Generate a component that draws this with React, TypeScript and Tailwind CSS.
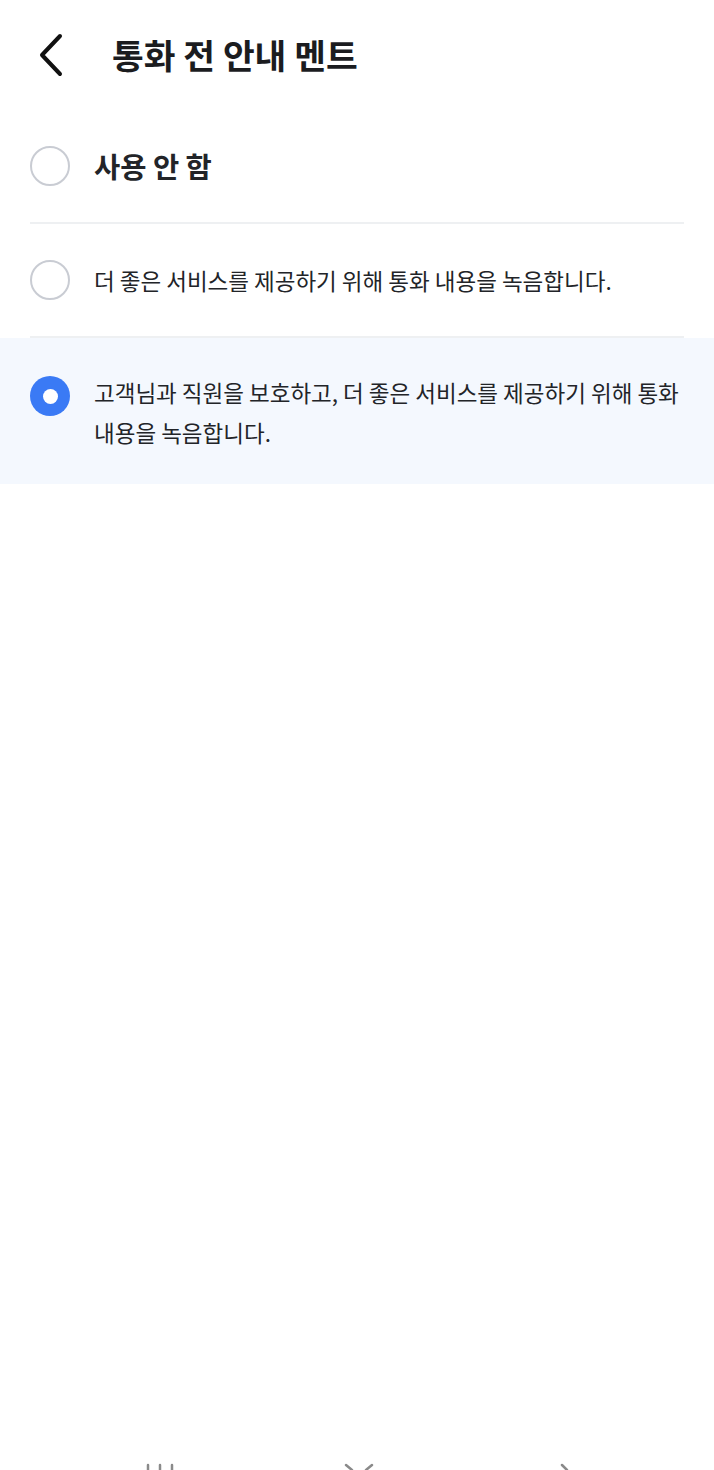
import { useState } from "react"

const options = [
  { id: "none", label: "사용 안 함", bold: true },
  { id: "basic", label: "더 좋은 서비스를 제공하기 위해 통화 내용을 녹음합니다." },
  { id: "full", label: "고객님과 직원을 보호하고, 더 좋은 서비스를 제공하기 위해 통화 내용을 녹음합니다." },
]

function Radio({ checked }: { checked: boolean }) {
  if (checked) {
    return (
      <span className="flex h-[40px] w-[40px] shrink-0 items-center justify-center rounded-full bg-[#3a7af5]">
        <span className="h-[15px] w-[15px] rounded-full bg-white" />
      </span>
    )
  }
  return <span className="block h-[40px] w-[40px] shrink-0 rounded-full border-2 border-[#c9ccd3] bg-white" />
}

export default function App() {
  const [selected, setSelected] = useState("full")

  return (
    <div
      className="relative flex h-[1470px] w-full flex-col overflow-hidden bg-white text-[#222428]"
      style={{ fontFamily: '"Noto Sans CJK KR", "Noto Sans", sans-serif' }}
    >
      {/* 헤더 */}
      <header className="flex h-[110px] items-center pl-[38px]">
        <button className="flex h-[44px] w-[30px] items-center">
          <svg width="26" height="44" viewBox="0 0 26 44" fill="none">
            <path d="M22 3 L4 22 L22 41" stroke="#111" strokeWidth="4" strokeLinecap="round" strokeLinejoin="round" />
          </svg>
        </button>
        <h1 className="ml-[44px] text-[34.5px] font-bold text-[#1b1c1f]">통화 전 안내 멘트</h1>
      </header>

      {/* 옵션 */}
      <div className="flex flex-col">
        {options.map((opt, i) => {
          const checked = selected === opt.id
          const multi = opt.id === "full"
          return (
            <div key={opt.id} className={checked ? "bg-[#f4f8fe]" : "bg-white"}>
              <button
                onClick={() => setSelected(opt.id)}
                className={`flex w-full gap-[24px] px-[30px] text-left ${
                  multi ? "items-start pt-[34px] pb-[32px]" : "h-[112px] items-center"
                }`}
              >
                <span className={`flex shrink-0 ${multi ? "mt-[4px]" : ""}`}>
                  <Radio checked={checked} />
                </span>
                {opt.bold ? (
                  <span className="text-[28.5px] font-bold">{opt.label}</span>
                ) : (
                  <span className="text-[22.5px] leading-[40px]">{opt.label}</span>
                )}
              </button>
              {i < options.length - 1 && <div className="mx-[30px] h-[2px] bg-[#eef0f2]" />}
            </div>
          )
        })}
      </div>

      {/* 하단 내비게이션 바 (잘림) */}
      <div className="absolute bottom-0 left-0 right-0 h-[8px]">
        <svg width="714" height="8" viewBox="0 0 714 8" className="block">
          <g stroke="#8a8a8a" strokeWidth="2.5" strokeLinecap="round">
            <line x1="148" y1="3" x2="148" y2="10" />
            <line x1="160" y1="3" x2="160" y2="10" />
            <line x1="172" y1="3" x2="172" y2="10" />
            <line x1="346" y1="3" x2="352" y2="8" />
            <line x1="372" y1="3" x2="366" y2="8" />
            <line x1="562" y1="3" x2="567" y2="8" />
          </g>
        </svg>
      </div>
    </div>
  )
}
